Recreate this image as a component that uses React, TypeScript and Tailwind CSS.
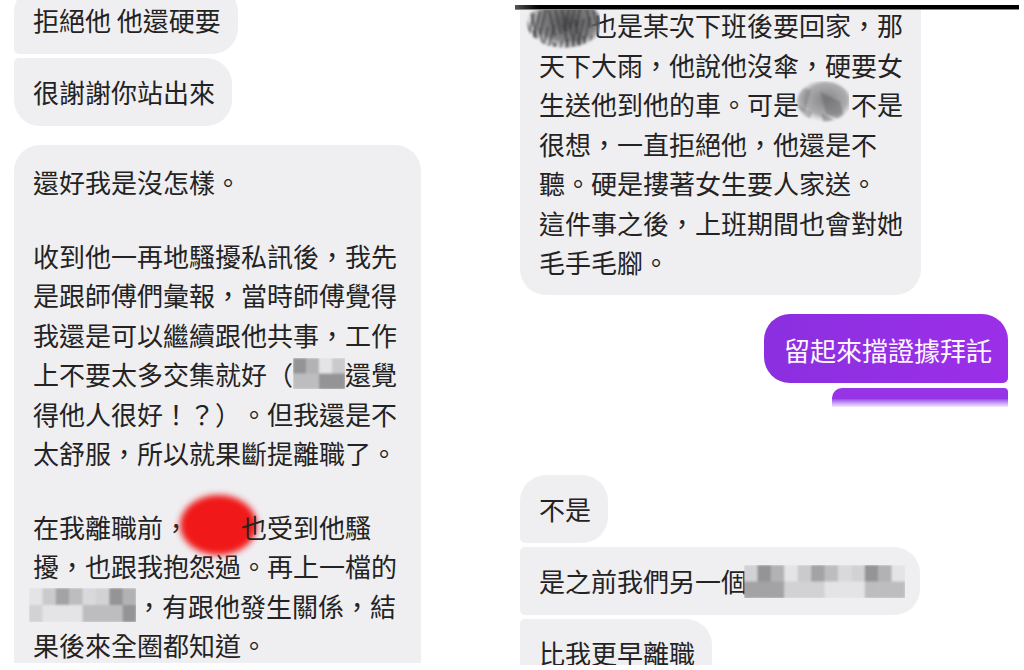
import React from "react";

const FONT = { fontFamily: '"Noto Sans CJK TC", "Noto Sans CJK SC", sans-serif' };

const SHADES = ["#d9d9db", "#bdbdc0", "#a3a3a6", "#cacacd", "#e4e4e6", "#b2b2b5", "#949497", "#d2d2d5"];

function Mosaic({ w, h, cols, rows, seed }: { w: number; h: number; cols: number; rows: number; seed: number }) {
  const cw = w / cols;
  const rh = h / rows;
  const rects = [];
  for (let r = 0; r < rows; r++) {
    for (let c = 0; c < cols; c++) {
      const idx = (c * 7 + r * 3 + seed * 5 + ((c * r + seed) % 3)) % SHADES.length;
      rects.push(<rect key={`${r}-${c}`} x={c * cw} y={r * rh} width={cw + 0.5} height={rh + 0.5} fill={SHADES[idx]} />);
    }
  }
  return (
    <svg width={w} height={h} viewBox={`0 0 ${w} ${h}`} className="block">
      <defs>
        <filter id={`mb${seed}`} x="0" y="0" width="1" height="1">
          <feGaussianBlur stdDeviation="1" />
        </filter>
      </defs>
      <g filter={`url(#mb${seed})`}>{rects}</g>
    </svg>
  );
}

function Scribble({ w, h, dark }: { w: number; h: number; dark: boolean }) {
  const lines = [];
  for (let i = 0; i < 40; i++) {
    const x1 = (i * 29) % w;
    const y1 = (i * 11) % h;
    lines.push(
      <line key={i} x1={x1} y1={y1} x2={x1 + (i % 2 ? 6 : -6)} y2={y1 + h * 0.5} stroke={dark ? "#3a3a3c" : "#6a6a6c"} strokeWidth={dark ? 2.5 : 1.5} strokeOpacity={0.55} />
    );
  }
  return (
    <svg width={w} height={h} viewBox={`0 0 ${w} ${h}`} className="block">
      <defs>
        <radialGradient id={dark ? "sgd" : "sgl"} cx="55%" cy="45%" r="55%">
          <stop offset="0%" stopColor={dark ? "#4a4a4c" : "#7d7d80"} stopOpacity="0.95" />
          <stop offset="70%" stopColor={dark ? "#6a6a6c" : "#9c9c9f"} stopOpacity="0.8" />
          <stop offset="100%" stopColor={dark ? "#9a9a9c" : "#c4c4c7"} stopOpacity="0" />
        </radialGradient>
        <clipPath id={dark ? "scd" : "scl"}>
          <ellipse cx={w * 0.55} cy={h * 0.48} rx={w * 0.46} ry={h * 0.46} />
        </clipPath>
        <filter id={dark ? "sfd" : "sfl"}>
          <feGaussianBlur stdDeviation="1.2" />
        </filter>
      </defs>
      <g filter={`url(#${dark ? "sfd" : "sfl"})`}>
        <ellipse cx={w * 0.55} cy={h * 0.48} rx={w * 0.48} ry={h * 0.48} fill={`url(#${dark ? "sgd" : "sgl"})`} />
        <g clipPath={`url(#${dark ? "scd" : "scl"})`}>{lines}</g>
      </g>
    </svg>
  );
}

function Line({ children }: { children: React.ReactNode }) {
  return <div className="whitespace-nowrap">{children}</div>;
}

export default function App() {
  return (
    <div className="w-[1024px] h-[670px] bg-white overflow-hidden flex text-[26px] leading-[39.5px] text-[#232323] [text-spacing-trim:space-all]" style={FONT}>
      {/* Left screenshot */}
      <div className="w-[515px] h-[663px] overflow-hidden flex flex-col items-start pl-[14px]">
        <div className="shrink-0 -mt-[14px] bg-[#efeef1] rounded-[26px] rounded-bl-[5px] pl-[19px] pr-[17px] py-[14px] leading-[40px] whitespace-nowrap">
          拒絕他 他還硬要
        </div>
        <div className="shrink-0 mt-[4px] bg-[#efeef1] rounded-[26px] rounded-tl-[5px] pl-[19px] pr-[17px] py-[14px] leading-[40px] whitespace-nowrap">
          很謝謝你站出來
        </div>
        <div className="shrink-0 mt-[19px] w-[407px] bg-[#efeef1] rounded-t-[26px] pl-[19px] pt-[17px]">
          <div className="mb-[34px]">
            <Line>還好我是沒怎樣。</Line>
          </div>
          <div className="mb-[34px]">
            <Line>收到他一再地騷擾私訊後，我先</Line>
            <Line>是跟師傅們彙報，當時師傅覺得</Line>
            <Line>我還是可以繼續跟他共事，工作</Line>
            <div className="flex items-center whitespace-nowrap">
              <span>上不要太多交集就好（</span>
              <span className="inline-block">
                <Mosaic w={52} h={31} cols={4} rows={2} seed={1} />
              </span>
              <span>還覺</span>
            </div>
            <Line>得他人很好！？）。但我還是不</Line>
            <Line>太舒服，所以就果斷提離職了。</Line>
          </div>
          <div>
            <div className="flex whitespace-nowrap">
              <span>在我離職前，</span>
              <span className="relative inline-block w-[52px] h-[39.5px]">
                <span className="absolute left-[-9px] top-[-12px] w-[77px] h-[60px] rounded-[50%] bg-[#f01818] blur-[3px]" />
              </span>
              <span className="relative">也受到他騷</span>
            </div>
            <Line>擾，也跟我抱怨過。再上一檔的</Line>
            <div className="flex items-center whitespace-nowrap -ml-[4px]">
              <span className="inline-block">
                <Mosaic w={107} h={34} cols={8} rows={2} seed={2} />
              </span>
              <span>，有跟他發生關係，結</span>
            </div>
            <Line>果後來全圈都知道。</Line>
          </div>
        </div>
      </div>

      {/* Right screenshot */}
      <div className="relative w-[509px] h-[660px] mt-[5px] overflow-hidden flex flex-col items-start">
        <div className="shrink-0 ml-[5px] w-[401px] bg-[#efeef1] rounded-b-[26px] pl-[19px] pr-[18px] pb-[13px]">
          <div className="flex whitespace-nowrap">
            <span className="relative inline-block w-[52px] h-[39.5px]">
              <span className="absolute left-[-19px] top-[-6px]">
                <Scribble w={80} h={52} dark={true} />
              </span>
            </span>
            <span>也是某次下班後要回家，那</span>
          </div>
          <Line>天下大雨，他說他沒傘，硬要女</Line>
          <div className="flex whitespace-nowrap">
            <span>生送他到他的車。可是</span>
            <span className="relative inline-block w-[52px] h-[39.5px]">
              <span className="absolute left-[-7px] top-[-3px]">
                <Scribble w={57} h={43} dark={false} />
              </span>
            </span>
            <span>不是</span>
          </div>
          <Line>很想，一直拒絕他，他還是不</Line>
          <Line>聽。硬是摟著女生要人家送。</Line>
          <Line>這件事之後，上班期間也會對她</Line>
          <Line>毛手毛腳。</Line>
        </div>

        <div className="shrink-0 self-end mr-[16px] mt-[19px] bg-linear-to-r from-[#8b2fe0] to-[#9c2fe9] text-[#fdf6ff] rounded-[26px] rounded-br-[5px] pl-[20px] pr-[16px] pt-[16px] pb-[13px] leading-[40px] whitespace-nowrap">
          留起來擋證據拜託
        </div>
        <div className="shrink-0 self-end mr-[16px] mt-[5px] w-[176px] h-[19px] rounded-tl-[10px] rounded-tr-[4px] bg-linear-to-b from-[#9634e6] from-55% to-[#f4ecfb]" />

        <div className="shrink-0 ml-[5px] mt-[68px] bg-[#efeef1] rounded-[26px] rounded-bl-[5px] pl-[19px] pr-[17px] py-[14px] leading-[40px] whitespace-nowrap">
          不是
        </div>
        <div className="shrink-0 ml-[5px] mt-[4px] w-[400px] bg-[#efeef1] rounded-r-[26px] rounded-l-[5px] pl-[19px] py-[14px] leading-[40px] whitespace-nowrap flex items-center">
          <span>是之前我們另一個</span>
          <span className="inline-block -ml-[3px] mt-[2px]">
            <Mosaic w={161} h={33} cols={12} rows={2} seed={3} />
          </span>
        </div>
        <div className="shrink-0 ml-[5px] mt-[4px] bg-[#efeef1] rounded-[26px] rounded-tl-[5px] pl-[19px] pr-[17px] py-[14px] leading-[40px] whitespace-nowrap">
          比我更早離職
        </div>

        <div className="absolute top-0 left-0 w-[504px] h-[4px] bg-linear-to-r from-[#555] from-0% via-black via-[6%] to-black" />
        <div className="absolute top-[4px] left-0 w-[504px] h-[1px] bg-[#888]" />
      </div>
    </div>
  );
}
